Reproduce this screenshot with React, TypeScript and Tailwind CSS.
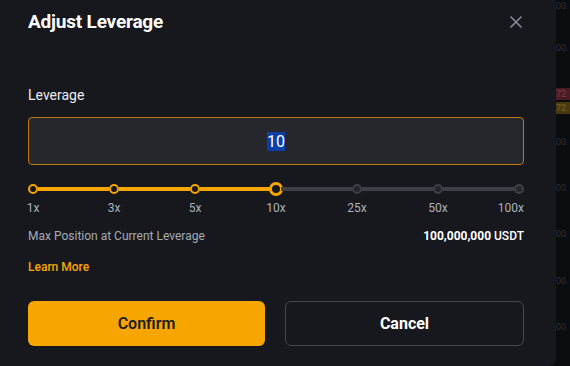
import React from "react";

const AMBER = "#f7a600";

function Dot({ state }: { state: "done" | "active" | "todo" }) {
  if (state === "active") {
    return (
      <div className="w-[10px] h-[14px] flex items-center justify-center shrink-0">
        <div className="w-[14px] h-[14px] shrink-0 rounded-full border-[3px] border-[#f7a600] bg-[#17181e]" />
      </div>
    );
  }
  if (state === "done") {
    return <div className="w-[10px] h-[10px] shrink-0 rounded-full border-2 border-[#f7a600] bg-[#17181e]" />;
  }
  return <div className="w-[10px] h-[10px] shrink-0 rounded-full border-2 border-[#3c3f46] bg-[#24262b]" />;
}

function Seg({ on }: { on: boolean }) {
  return <div className={on ? "flex-1 h-[4px] bg-[#f7a600]" : "flex-1 h-[4px] bg-[#3c3f46]"} />;
}

export default function App() {
  const labels = ["1x", "3x", "5x", "10x", "25x", "50x", "100x"];
  const activeIdx = 3;
  const items: React.ReactNode[] = [];
  labels.forEach((_, i) => {
    if (i > 0) items.push(<Seg key={"s" + i} on={i <= activeIdx} />);
    items.push(<Dot key={"d" + i} state={i < activeIdx ? "done" : i === activeIdx ? "active" : "todo"} />);
  });

  return (
    <div
      className="flex w-[570px] h-[366px] overflow-hidden bg-[#0b0c10]"
      style={{ fontFamily: "Roboto, 'Liberation Sans', sans-serif" }}
    >
      <div className="w-[556px] h-full shrink-0 bg-[#17181e] rounded-br-[8px] flex flex-col px-[28px]">
        <div className="pt-[8px] flex items-center justify-between">
          <div className="text-[19px] leading-[28px] font-bold text-white tracking-[-0.2px]">Adjust Leverage</div>
          <svg width="12" height="12" viewBox="0 0 12 12" className="mr-[6px]">
            <path d="M1 1L11 11M11 1L1 11" stroke="#848e9c" strokeWidth="1.6" strokeLinecap="round" />
          </svg>
        </div>

        <div className="mt-[49px] text-[14px] leading-[20px] text-[#eaecef]">Leverage</div>

        <div className="mt-[12px] h-[48px] w-[496px] rounded-[4px] border border-[#bf780e] bg-[#25272c] flex items-center justify-center">
          <span className="bg-[#0b3ea6] text-white text-[16px] leading-[19px] px-0">10</span>
        </div>

        <div className="mt-[17px] w-[496px] h-[14px] flex items-center">{items}</div>

        <div className="mt-[4px] w-[496px] flex justify-between text-[12px] leading-[16px] text-[#aab0b8]">
          {labels.map((l, i) => (
            <div
              key={l}
              className={
                i === labels.length - 1
                  ? "w-[10px] flex justify-end whitespace-nowrap"
                  : "w-[10px] flex justify-center whitespace-nowrap"
              }
            >
              {l}
            </div>
          ))}
        </div>

        <div className="mt-[12px] w-[496px] flex justify-between text-[12px] leading-[16px]">
          <span className="text-[#a6abb3]">Max Position at Current Leverage</span>
          <span className="text-white">
            <span className="font-bold">100,000,000</span>
            <span className="font-medium"> USDT</span>
          </span>
        </div>

        <div className="mt-[15px] text-[12px] leading-[16px] font-medium" style={{ color: AMBER }}>
          Learn More
        </div>

        <div className="mt-[26px] w-[496px] flex gap-[20px]">
          <button className="flex-1 h-[45px] rounded-[6px] bg-[#f7a600] text-[#1b1d22] text-[16px] font-semibold">
            Confirm
          </button>
          <button className="flex-1 h-[45px] rounded-[6px] border border-[#44474e] text-white text-[16px] font-bold">
            Cancel
          </button>
        </div>
      </div>

      <div className="flex-1 flex flex-col text-[9px] leading-[12px] text-[#2e3137]">
        <div className="mt-[0px]">00.</div>
        <div className="mt-[30px]">00.</div>
        <div className="mt-[34px] bg-[#4a1b22] text-[#7a3e47]">72.</div>
        <div className="mt-[2px] bg-[#4a3910] text-[#7a6228]">72.</div>
        <div className="mt-[22px]">00.</div>
        <div className="mt-[34px]">00.</div>
        <div className="mt-[34px]">00.</div>
        <div className="mt-[35px]">00.</div>
        <div className="mt-[34px]">00.</div>
      </div>
    </div>
  );
}
